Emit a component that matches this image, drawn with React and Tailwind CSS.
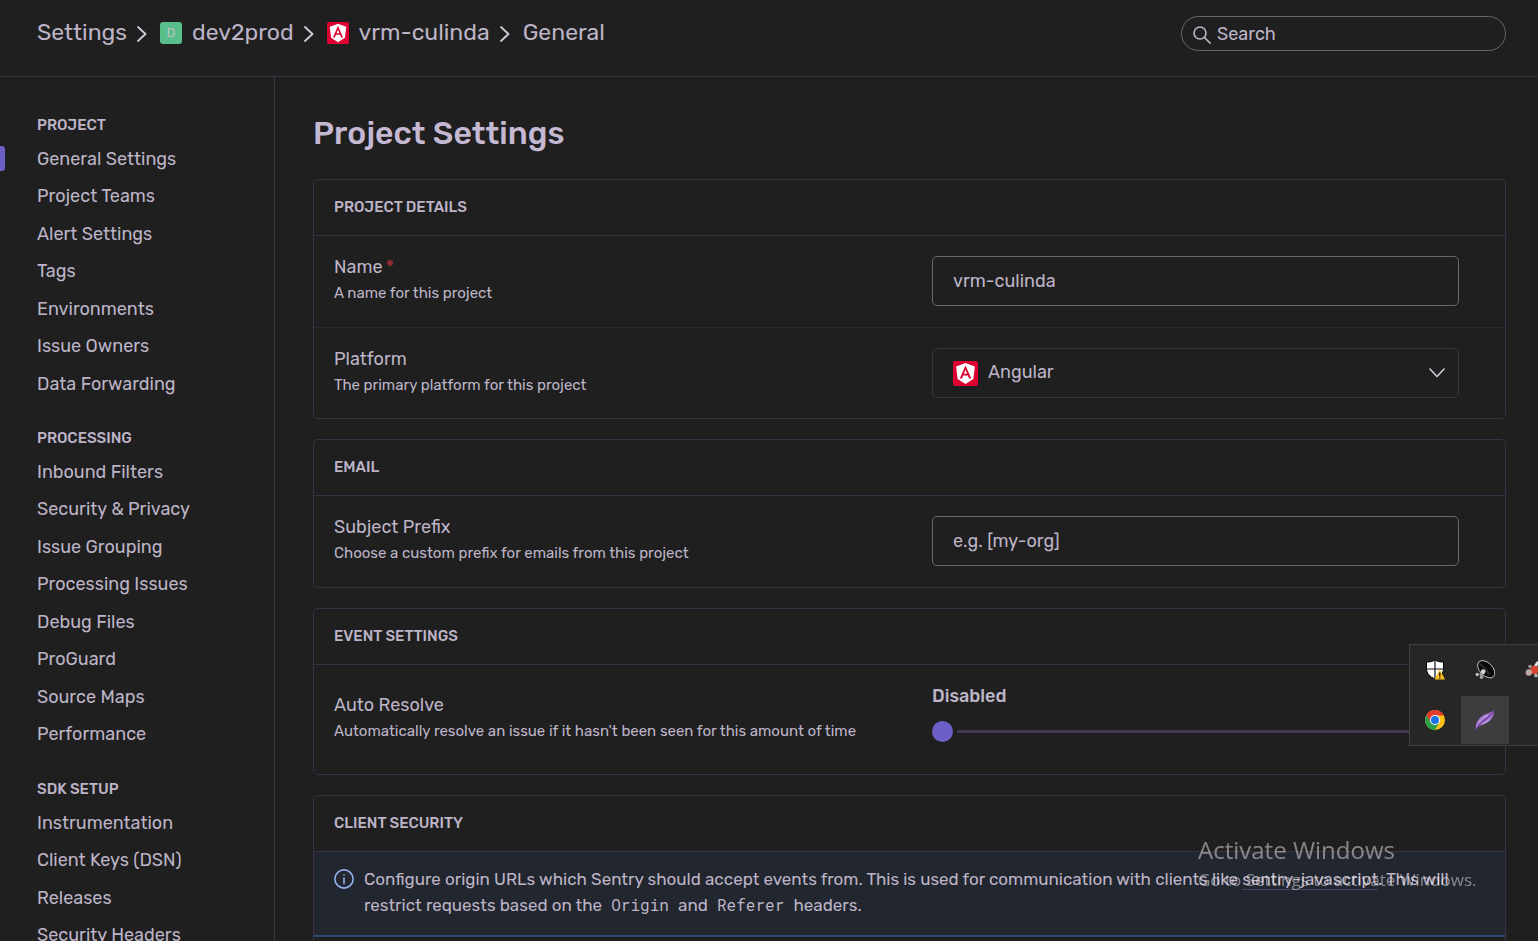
const NAV = [
  {
    title: 'Project',
    items: ['General Settings', 'Project Teams', 'Alert Settings', 'Tags', 'Environments', 'Issue Owners', 'Data Forwarding'],
  },
  {
    title: 'Processing',
    items: ['Inbound Filters', 'Security & Privacy', 'Issue Grouping', 'Processing Issues', 'Debug Files', 'ProGuard', 'Source Maps', 'Performance'],
  },
  {
    title: 'SDK Setup',
    items: ['Instrumentation', 'Client Keys (DSN)', 'Releases', 'Security Headers'],
  },
];

function AngularIcon({ className }) {
  return (
    <svg viewBox="0 0 24 24" className={className} aria-hidden="true">
      <rect width="24" height="24" rx="2" fill="#dd0031" />
      <path d="M12 2 21 5.2 19.6 17.2 12 22 4.4 17.2 3 5.2Z" fill="#fff" />
      <path d="M12 4.2 6.5 16.8h2.1l1.1-2.8h4.6l1.1 2.8h2.1L12 4.2Zm1.6 8.1h-3.2L12 8.4l1.6 3.9Z" fill="#dd0031" />
    </svg>
  );
}

function Chevron() {
  return (
    <svg viewBox="0 0 10 18" className="mt-1 h-[18px] w-[10px] shrink-0" fill="none" stroke="#d2cbd9" strokeWidth="1.8" strokeLinecap="round" strokeLinejoin="round" aria-hidden="true">
      <path d="M1 2 8.5 9 1 16" />
    </svg>
  );
}

function Header() {
  return (
    <header className="flex h-[77px] shrink-0 items-start justify-between border-b border-[#393146] pr-8 pl-[37px]">
      <nav aria-label="Breadcrumb" className="mt-4 flex h-8 items-center gap-[10px] text-[23px]">
        <a href="#settings">Settings</a>
        <Chevron />
        <a href="#dev2prod" className="ml-[3px] flex items-center gap-[10px]">
          <span className="mt-[2px] flex size-[22px] items-center justify-center rounded-[3px] bg-[#57be8c] text-[13px] text-[#bcc2c4]">D</span>
          dev2prod
        </a>
        <Chevron />
        <a href="#vrm-culinda" className="ml-[3px] flex items-center gap-[10px]">
          <AngularIcon className="mt-[2px] size-[22px]" />
          vrm-culinda
        </a>
        <Chevron />
        <a href="#general" className="ml-[3px]">General</a>
      </nav>
      <label className="mt-4 flex h-[35px] w-[325px] items-center gap-[6px] rounded-full border border-[#68656c] pl-[11px]">
        <svg viewBox="0 0 18 18" className="mt-[2px] size-[18px] shrink-0" fill="none" stroke="currentColor" strokeWidth="1.6" strokeLinecap="round" aria-hidden="true">
          <circle cx="7" cy="7" r="6" />
          <path d="m11.4 11.4 5.8 5.8" />
        </svg>
        <input type="search" aria-label="Search" placeholder="Search" className="min-w-0 flex-1 bg-transparent text-lg outline-none placeholder:text-[#bdb4c7]" />
      </label>
    </header>
  );
}

function Sidebar() {
  return (
    <aside className="flex w-[275px] shrink-0 flex-col gap-[26px] border-r border-[#393146] pt-[38px]">
      {NAV.map((group, g) => (
        <section key={group.title}>
          <h2 className="mb-[5px] pl-[37px] text-[15px] leading-5 font-medium uppercase">{group.title}</h2>
          <ul>
            {group.items.map((item, i) => (
              <li key={item} className="flex items-center odd:h-[37px] even:h-[38px]">
                <span className={g === 0 && i === 0 ? 'h-[25px] w-[5px] rounded-r-[3px] bg-[#6c5fc7]' : 'w-[5px]'} />
                <a href="#settings" className="ml-8 text-lg leading-6">{item}</a>
              </li>
            ))}
          </ul>
        </section>
      ))}
    </aside>
  );
}

function Panel({ title, children }) {
  return (
    <section className="rounded-[5px] border border-[#393146]">
      <h2 className="flex h-[56px] items-center border-b border-[#393146] px-5 text-[15px] font-medium uppercase">{title}</h2>
      {children}
    </section>
  );
}

function Field({ id, label, help, required, children }) {
  return (
    <div className="grid grid-cols-[598fr_527fr] items-center border-b border-[#2a2632] pt-5 pr-[46px] pb-5 pl-5 first-of-type:pb-[21px] last:border-b-0">
      <label htmlFor={id} className="block">
        <span className="flex gap-1 text-lg leading-[22px]">
          {label}
          {required && <span className="mt-1 size-[6px] rounded-full bg-[#8c2a31]" />}
        </span>
        <span className="mt-[2px] block text-[15px] leading-[26px]">{help}</span>
      </label>
      {children}
    </div>
  );
}

function Tray() {
  return (
    <div className="fixed top-[644px] right-0 grid h-[102px] w-[129px] grid-cols-[repeat(3,48px)] grid-rows-[48px_48px] gap-x-[2px] gap-y-[2px] overflow-hidden border border-r-0 border-[#3f3f3f] bg-[#262626] pt-px pl-px">
      <button aria-label="Security" className="flex items-center justify-center">
        <svg viewBox="0 0 20 20" className="size-5">
          <path d="M10 0c2.600 1.600 5.400 2.100 8.500 2v6.500c0 5-3.500 8.300-8.500 10.500C5 16.800 1.500 13.500 1.500 8.500V2C4.600 2.100 7.400 1.600 10 0Z" fill="#fff" stroke="#000" />
          <path d="M10 0.500v18M1.500 9h17" stroke="#111" strokeWidth="1.200" />
          <path d="M14.800 9.500 20 19.500H9.600Z" fill="#fdbf1b" />
          <path d="M14.800 12.500v3.800M14.800 17.200v1.400" stroke="#111" strokeWidth="1.300" />
        </svg>
      </button>
      <button aria-label="Sound" className="flex items-center justify-center">
        <svg viewBox="0 0 20 20" className="size-5">
          <ellipse cx="11.200" cy="9.200" rx="10.400" ry="6.400" transform="rotate(45 11.200 9.200)" fill="#0a0a0a" stroke="#c9c9c9" strokeWidth="0.900" />
          <path d="M4 3.500C8 6 12 10 14.500 15" fill="none" stroke="#333" strokeWidth="1.500" />
          <path d="m4 14 4-3 1.500 3-3.500 2Z" fill="#999" />
          <circle cx="8.200" cy="11.500" r="2.300" fill="#d8d8d8" />
          <circle cx="2.200" cy="14.500" r="1.700" fill="#bdbdbd" />
          <circle cx="6.500" cy="17" r="1.900" fill="#a5a5a5" />
        </svg>
      </button>
      <button aria-label="Molecule" className="flex items-center justify-center">
        <svg viewBox="0 0 20 20" className="size-5">
          <path d="m8 10 5-8" stroke="#ddd" strokeWidth="3" />
          <circle cx="9.500" cy="10" r="4.200" fill="#d8452f" />
          <circle cx="3.800" cy="12.500" r="3.200" fill="#bda6a2" />
          <circle cx="5" cy="6.500" r="1.800" fill="#999" />
          <circle cx="11" cy="15.500" r="2" fill="#aaa" />
        </svg>
      </button>
      <button aria-label="Chrome" className="flex items-center justify-center">
        <svg viewBox="0 0 20 20" className="size-5">
          <circle cx="10" cy="10" r="10" fill="#fbc116" />
          <path d="M10 10 1.340 5A10 10 0 0 0 10 20l4.330-7.500Z" fill="#2da14c" />
          <path d="M10 5.500h8.900A10 10 0 0 0 1.340 5l4.600 7.500Z" fill="#e33b2e" />
          <circle cx="10" cy="10" r="5" fill="#fff" />
          <circle cx="10" cy="10" r="4" fill="#1a73e8" />
        </svg>
      </button>
      <button aria-label="Feather" className="flex items-center justify-center bg-[#3d3d3d]">
        <svg viewBox="0 0 20 20" className="size-5">
          <path d="M1 19.500C0 13.500 3 8.500 8 5.500 11.500 3.300 15.500 3 19 .3 19 6 17 10 12.500 12.500 8.500 14.700 4 15.500 1 19.500Z" fill="#a273cc" />
          <path d="M1 19.500C4.500 14 8 11 12 8c3-2.300 5-4.200 7-7.500" stroke="#6a3699" strokeWidth="1.100" fill="none" />
          <path d="M4 12.500C6 9 9 7.200 13 5.500M6.500 14c3-1.500 5.500-2.300 8-5" stroke="#cdb3e6" strokeWidth="1" fill="none" />
        </svg>
      </button>
    </div>
  );
}

export default function App() {
  return (
    <div className="flex h-screen flex-col overflow-hidden bg-[#1f1f1f] font-['Rubik','Roboto',sans-serif] text-[#bdb4c7]">
      <Header />
      <div className="flex min-h-0 flex-1 overflow-hidden">
        <Sidebar />
        <main className="min-w-0 flex-1 pt-9 pr-8 pl-[38px]">
          <h1 className="mb-[26px] text-[32px] leading-10 font-medium text-[#c5b8d3]">Project Settings</h1>
          <div className="flex flex-col gap-5">
            <Panel title="Project Details">
              <Field id="name" label="Name" help="A name for this project" required>
                <input id="name" defaultValue="vrm-culinda" className="h-[50px] w-full rounded-[5px] border border-[#68656c] bg-transparent px-5 text-lg outline-none" />
              </Field>
              <Field id="platform" label="Platform" help="The primary platform for this project">
                <div className="relative">
                  <select id="platform" className="h-[50px] w-full appearance-none rounded-[5px] border border-[#393146] bg-transparent pr-10 pb-[2px] pl-[55px] text-lg outline-none">
                    <option>Angular</option>
                  </select>
                  <AngularIcon className="pointer-events-none absolute top-[13px] left-[21px] size-[25px]" />
                  <svg viewBox="0 0 16 10" className="pointer-events-none absolute top-5 right-[14px] h-[10px] w-4" fill="none" stroke="#d2cbd9" strokeWidth="1.6" strokeLinecap="round" strokeLinejoin="round" aria-hidden="true">
                    <path d="m1 1 7 7.500L15 1" />
                  </svg>
                </div>
              </Field>
            </Panel>
            <Panel title="Email">
              <Field id="prefix" label="Subject Prefix" help="Choose a custom prefix for emails from this project">
                <input id="prefix" placeholder="e.g. [my-org]" className="h-[50px] w-full rounded-[5px] border border-[#68656c] bg-transparent px-5 text-lg outline-none placeholder:text-[#bdb4c7]" />
              </Field>
            </Panel>
            <Panel title="Event Settings">
              <Field id="resolve" label="Auto Resolve" help="Automatically resolve an issue if it hasn't been seen for this amount of time">
                <div className="flex flex-col gap-[14px] pb-[11px]">
                  <output htmlFor="resolve" className="text-lg leading-[22px] font-medium">Disabled</output>
                  <input
                    id="resolve"
                    type="range"
                    min="0"
                    max="168"
                    defaultValue="0"
                    className="h-[21px] w-full appearance-none bg-transparent [&::-webkit-slider-runnable-track]:h-[3px] [&::-webkit-slider-runnable-track]:bg-[#43364f] [&::-webkit-slider-thumb]:-mt-[9px] [&::-webkit-slider-thumb]:size-[21px] [&::-webkit-slider-thumb]:appearance-none [&::-webkit-slider-thumb]:rounded-full [&::-webkit-slider-thumb]:bg-[#6c5fc7] [&::-webkit-slider-thumb]:shadow-[0_0_0_4px_#1f1f1f]"
                  />
                </div>
              </Field>
            </Panel>
            <Panel title="Client Security">
              <div className="flex gap-[10px] border-b-2 border-[#2c4a78] bg-[#22262f] px-5 pt-[14px] pb-[17px]">
                <svg viewBox="0 0 20 20" className="mt-[3px] size-5 shrink-0" fill="none" stroke="#92b0ee" strokeWidth="1.600" strokeLinecap="round" aria-hidden="true">
                  <circle cx="10" cy="10" r="9.100" />
                  <path d="M10 9v5.500M10 5.700v.1" />
                </svg>
                <p className="text-[17px] leading-[26px]">
                  Configure origin URLs which Sentry should accept events from. This is used for communication with clients like{' '}
                  <a href="#sentry-javascript" className="border-b border-[#4a3f63]">sentry-javascript</a>. This will restrict requests based on the{' '}
                  <code className="px-[5px] font-['Roboto_Mono','Liberation_Mono',monospace] text-base">Origin</code> and{' '}
                  <code className="px-[5px] font-['Roboto_Mono','Liberation_Mono',monospace] text-base">Referer</code> headers.
                </p>
              </div>
              <div className="h-24" />
            </Panel>
          </div>
        </main>
      </div>
      <Tray />
      <div className="pointer-events-none fixed right-14 bottom-12 w-[284px] font-['Open_Sans',sans-serif] whitespace-nowrap text-white/45">
        <p className="text-2xl leading-[34px]">Activate Windows</p>
        <p className="text-[17px] leading-[26px]">Go to Settings to activate Windows.</p>
      </div>
    </div>
  );
}
